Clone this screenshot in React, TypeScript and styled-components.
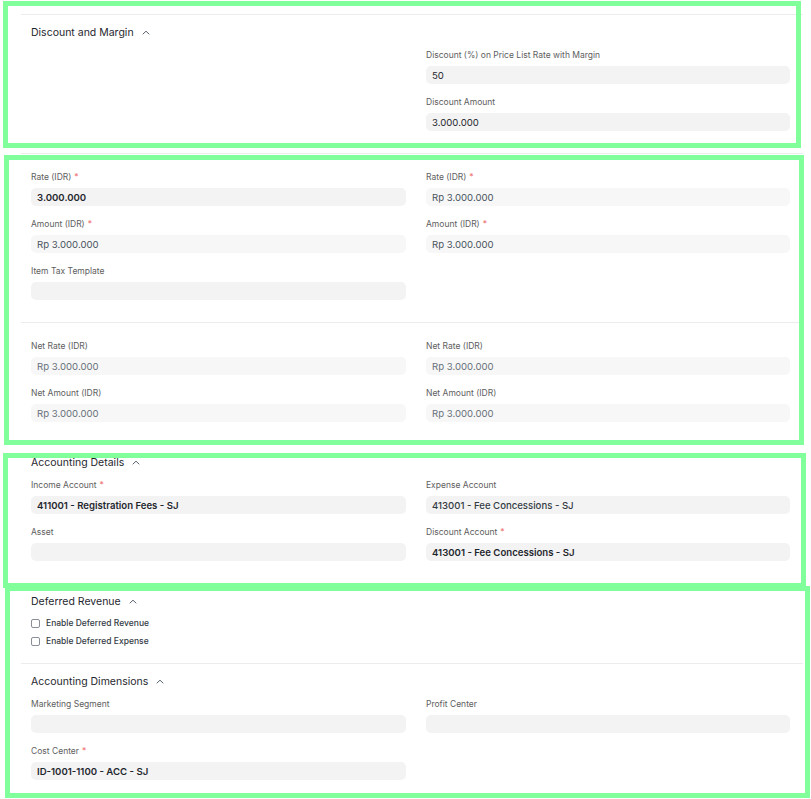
import React from "react";
import styled, { createGlobalStyle } from "styled-components";

const Global = createGlobalStyle`
  html, body { margin: 0; padding: 0; background: #ffffff; }
  body { font-family: Inter, "Noto Sans", "Liberation Sans", sans-serif; -webkit-font-smoothing: antialiased; }
  * { box-sizing: border-box; }
`;

const Page = styled.div`
  position: relative;
  width: 811px;
  height: 799px;
  overflow: hidden;
  background: #fff;
  padding-top: 14px;
`;

const Form = styled.div`
  margin-left: 21px;
  width: 782px;
`;

const Section = styled.section<{ $head?: boolean }>`
  border-top: 1px solid #ececec;
  padding: ${(p) => (p.$head ? "10px" : "17px")} 13px 10px 10px;
`;

const SectionHead = styled.div`
  display: flex;
  align-items: center;
  gap: 8px;
  height: 14px;
  font-size: 10.5px;
  font-weight: 400;
  color: #1f272e;
  margin-bottom: 10px;
`;

const Columns = styled.div`
  display: grid;
  grid-template-columns: 375px 364px;
  column-gap: 20px;
`;

const Column = styled.div`
  display: flex;
  flex-direction: column;
`;

const Field = styled.div`
  display: flex;
  flex-direction: column;
  margin-bottom: 12px;
`;

const Label = styled.div`
  height: 12px;
  line-height: 12px;
  font-size: 8.5px;
  color: #5e5e5e;
  margin-bottom: 5px;
  white-space: nowrap;
`;

const Req = styled.span`
  color: #f07878;
  margin-left: 3px;
`;

const Input = styled.div<{ $ro?: boolean; $weight?: number; $tone?: string }>`
  height: 18px;
  border-radius: 5px;
  background: ${(p) => (p.$ro ? "#f7f7f7" : "#f3f3f3")};
  padding: 0 6px;
  display: flex;
  align-items: center;
  font-size: 9.6px;
  font-weight: ${(p) => p.$weight ?? 400};
  color: ${(p) => p.$tone ?? "#1f272e"};
  white-space: nowrap;
`;

const Checks = styled.div`
  display: flex;
  flex-direction: column;
  margin-top: -4px;
  margin-bottom: 3px;
`;

const CheckRow = styled.label`
  display: flex;
  align-items: center;
  gap: 6px;
  height: 18px;
  font-size: 8.5px;
  font-weight: 500;
  color: #333b44;
`;

const Box = styled.span`
  width: 9px;
  height: 9px;
  border: 1px solid #8a8f96;
  border-radius: 2px;
  background: #fff;
`;

const Highlight = styled.div<{ $l: number; $t: number; $w: number; $h: number }>`
  position: absolute;
  left: ${(p) => p.$l}px;
  top: ${(p) => p.$t}px;
  width: ${(p) => p.$w}px;
  height: ${(p) => p.$h}px;
  border: 5px solid #80ff9b;
  pointer-events: none;
`;

const Chevron = () => (
  <svg width="8" height="5" viewBox="0 0 8 5" fill="none">
    <path d="M1 4L4 1.2L7 4" stroke="#5b6470" strokeWidth="1" strokeLinecap="round" strokeLinejoin="round" />
  </svg>
);

type F = {
  label?: string;
  req?: boolean;
  value?: string;
  ro?: boolean;
  weight?: number;
  tone?: string;
};

const FieldView = ({ f }: { f: F }) => (
  <Field>
    <Label>
      {f.label}
      {f.req && <Req>*</Req>}
    </Label>
    <Input $ro={f.ro} $weight={f.weight} $tone={f.tone}>
      {f.value}
    </Input>
  </Field>
);

const Col = ({ fields }: { fields: F[] }) => (
  <Column>
    {fields.map((f, i) => (
      <FieldView key={i} f={f} />
    ))}
  </Column>
);

const Head = ({ title }: { title: string }) => (
  <SectionHead>
    {title}
    <Chevron />
  </SectionHead>
);

const RO = "#4a545e";
const RO2 = "#68717a";

export default function App() {
  return (
    <Page>
      <Global />
      <Form>
        <Section $head>
          <Head title="Discount and Margin" />
          <Columns>
            <Col fields={[]} />
            <Col
              fields={[
                { label: "Discount (%) on Price List Rate with Margin", value: "50" },
                { label: "Discount Amount", value: "3.000.000" },
              ]}
            />
          </Columns>
        </Section>

        <Section>
          <Columns>
            <Col
              fields={[
                { label: "Rate (IDR)", req: true, value: "3.000.000", weight: 600 },
                { label: "Amount (IDR)", req: true, value: "Rp 3.000.000", ro: true, tone: RO },
                { label: "Item Tax Template", value: "" },
              ]}
            />
            <Col
              fields={[
                { label: "Rate (IDR)", req: true, value: "Rp 3.000.000", ro: true, tone: RO },
                { label: "Amount (IDR)", req: true, value: "Rp 3.000.000", ro: true, tone: RO },
              ]}
            />
          </Columns>
        </Section>

        <Section>
          <Columns>
            <Col
              fields={[
                { label: "Net Rate (IDR)", value: "Rp 3.000.000", ro: true, tone: RO2 },
                { label: "Net Amount (IDR)", value: "Rp 3.000.000", ro: true, tone: RO2 },
              ]}
            />
            <Col
              fields={[
                { label: "Net Rate (IDR)", value: "Rp 3.000.000", ro: true, tone: RO2 },
                { label: "Net Amount (IDR)", value: "Rp 3.000.000", ro: true, tone: RO2 },
              ]}
            />
          </Columns>
        </Section>

        <Section $head>
          <Head title="Accounting Details" />
          <Columns>
            <Col
              fields={[
                { label: "Income Account", req: true, value: "411001 - Registration Fees - SJ", weight: 600 },
                { label: "Asset", value: "" },
              ]}
            />
            <Col
              fields={[
                { label: "Expense Account", value: "413001 - Fee Concessions - SJ", weight: 500, tone: "#333b44" },
                { label: "Discount Account", req: true, value: "413001 - Fee Concessions - SJ", weight: 600 },
              ]}
            />
          </Columns>
        </Section>

        <Section $head>
          <Head title="Deferred Revenue" />
          <Checks>
            <CheckRow>
              <Box />
              Enable Deferred Revenue
            </CheckRow>
            <CheckRow>
              <Box />
              Enable Deferred Expense
            </CheckRow>
          </Checks>
        </Section>

        <Section $head>
          <Head title="Accounting Dimensions" />
          <Columns>
            <Col
              fields={[
                { label: "Marketing Segment", value: "" },
                { label: "Cost Center", req: true, value: "ID-1001-1100 - ACC - SJ", weight: 600 },
              ]}
            />
            <Col fields={[{ label: "Profit Center", value: "" }]} />
          </Columns>
        </Section>
      </Form>

      <Highlight $l={3} $t={1} $w={798} $h={147} />
      <Highlight $l={4} $t={155} $w={800} $h={290} />
      <Highlight $l={3} $t={453} $w={803} $h={135} />
      <Highlight $l={5} $t={586} $w={805} $h={212} />
    </Page>
  );
}
